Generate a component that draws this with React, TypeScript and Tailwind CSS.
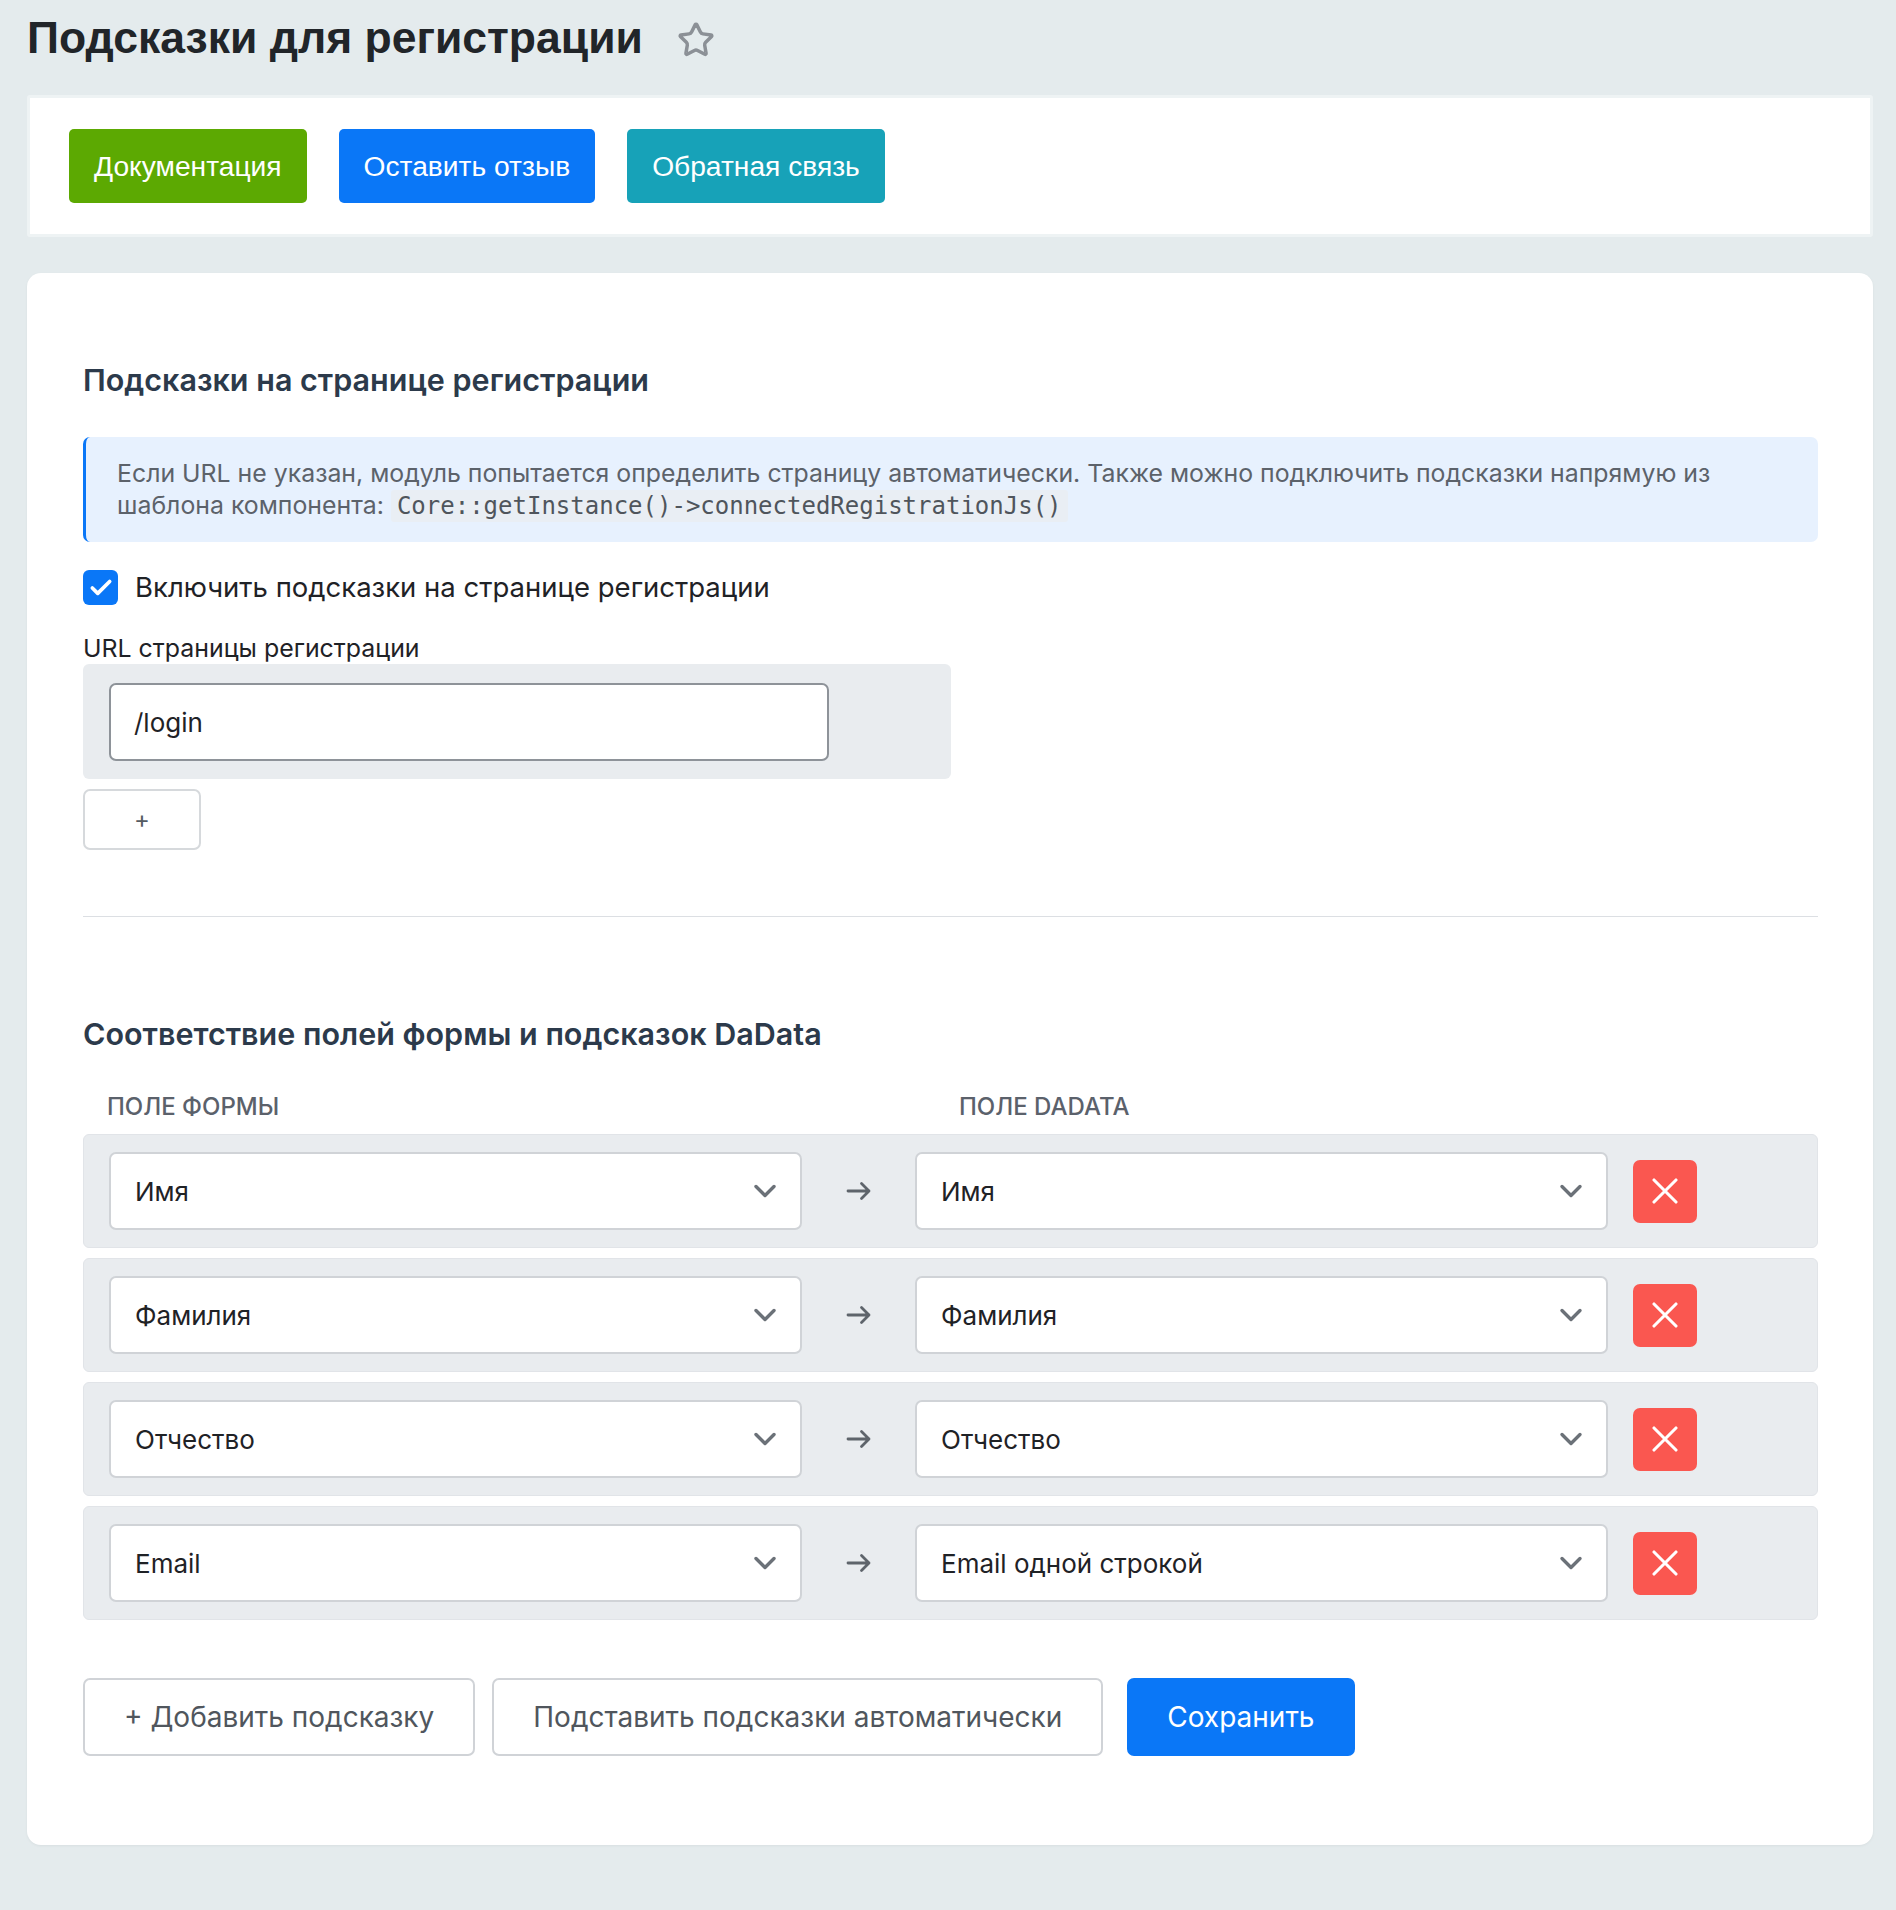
import { Star, Check } from "lucide-react";

const mappings = [
  { form: "Имя", dadata: "Имя" },
  { form: "Фамилия", dadata: "Фамилия" },
  { form: "Отчество", dadata: "Отчество" },
  { form: "Email", dadata: "Email одной строкой" },
];

const Chevron = () => (
  <svg width="24" height="14" viewBox="0 0 24 14" fill="none" stroke="#6b7178" strokeWidth="3.4" strokeLinecap="round" strokeLinejoin="round">
    <path d="M3 2.5 12 11.5 21 2.5" />
  </svg>
);

const Arrow = () => (
  <svg width="26" height="20" viewBox="0 0 26 20" fill="none" stroke="#5e646b" strokeWidth="2.8" strokeLinecap="round" strokeLinejoin="round">
    <path d="M2 10h21M15.5 2.5 23 10l-7.5 7.5" />
  </svg>
);

const Cross = () => (
  <svg width="26" height="26" viewBox="0 0 26 26" fill="none" stroke="#fff" strokeWidth="3.1" strokeLinecap="round">
    <path d="M2 2l22 22M24 2 2 24" />
  </svg>
);

const SelectBox = ({ value }: { value: string }) => (
  <div className="flex items-center justify-between w-[693px] h-[78px] bg-white border-2 border-[#d0d3d7] rounded-[7px] pl-[24px] pr-[23px]">
    <span className="text-[26px] text-[#1f2226]">{value}</span>
    <Chevron />
  </div>
);

const App = () => {
  return (
    <div className="min-h-[1910px] bg-[#e4ebed] pl-[27px] pr-[23px] font-['Inter',sans-serif]">
      {/* Page header */}
      <div className="h-[95px] flex items-start pt-[11px]">
        <h1 className="font-['Liberation_Sans',Arial,sans-serif] font-bold text-[44.5px] leading-[54px] text-[#212529]">
          Подсказки для регистрации
        </h1>
        <Star className="ml-[34px] mt-[10px] w-[38px] h-[38px] text-[#8b9096]" strokeWidth={2.2} />
      </div>

      {/* Links bar */}
      <div className="h-[142px] bg-white border-[3px] border-[#eef3f4] rounded-[3px] flex items-center gap-[32px] px-[39px] font-['Liberation_Sans',Arial,sans-serif]">
        <button className="h-[74px] px-[25px] rounded-[5px] bg-[#5ca902] text-white text-[28.2px]">
          Документация
        </button>
        <button className="h-[74px] px-[25px] rounded-[5px] bg-[#0a77f7] text-white text-[28.2px]">
          Оставить отзыв
        </button>
        <button className="h-[74px] px-[25px] rounded-[5px] bg-[#17a2b8] text-white text-[28.2px]">
          Обратная связь
        </button>
      </div>

      {/* Settings card */}
      <div className="mt-[36px] bg-white rounded-[14px] shadow-[0_1px_3px_rgba(0,0,0,0.05)] pl-[56px] pr-[55px] pt-[86px] pb-[89px]">
        <h2 className="text-[30.5px] leading-[42px] font-semibold text-[#2c3a4b]">
          Подсказки на странице регистрации
        </h2>

        <div className="mt-[36px] bg-[#e7f1fe] border-l-[3px] border-[#0a77f7] rounded-[7px] pl-[31px] pr-[20px] py-[20px] text-[24.85px] leading-[32px] text-[#5c626a]">
          Если URL не указан, модуль попытается определить страницу автоматически. Также можно подключить подсказки напрямую из
          <br />
          шаблона компонента:{" "}
          <code className="font-['DejaVu_Sans_Mono',monospace] text-[24px] bg-[#e9eef4] px-[6px] py-[2px] rounded-[3px] text-[#4f555c]">
            Core::getInstance()-&gt;connectedRegistrationJs()
          </code>
        </div>

        <label className="mt-[28px] flex items-center gap-[17px]">
          <span className="w-[35px] h-[35px] rounded-[6px] bg-[#0a77f7] flex items-center justify-center">
            <Check className="w-[26px] h-[26px] text-white" strokeWidth={3.4} />
          </span>
          <span className="text-[27.5px] leading-[35px] text-[#1f2226]">
            Включить подсказки на странице регистрации
          </span>
        </label>

        <div className="mt-[28px] text-[24.9px] leading-[30px] text-[#1f2226]">
          URL страницы регистрации
        </div>
        <div className="mt-[1px] w-[868px] bg-[#e9ecef] rounded-[6px] pl-[26px] pt-[19px] pb-[18px]">
          <div className="w-[720px] h-[78px] bg-white border-2 border-[#8e9399] rounded-[7px] flex items-center px-[23px] text-[26px] text-[#1f2226]">
            /login
          </div>
        </div>
        <button className="mt-[10px] w-[118px] h-[61px] bg-white border-2 border-[#d6d9dc] rounded-[7px] text-[24px] text-[#555b62]">
          +
        </button>

        <div className="mt-[66px] h-px bg-[#dcdfe3]" />

        <h2 className="mt-[96px] text-[30.5px] leading-[42px] font-semibold text-[#2c3a4b]">
          Соответствие полей формы и подсказок DaData
        </h2>

        <div className="mt-[38px] flex text-[24px] leading-[28px] font-medium uppercase text-[#5b616b]">
          <span className="w-[876px] pl-[24px]">Поле формы</span>
          <span>Поле DaData</span>
        </div>

        <div className="mt-[13px] flex flex-col gap-[10px]">
          {mappings.map((row) => (
            <div
              key={row.form}
              className="h-[114px] bg-[#e9ecef] border border-[#e1e4e8] rounded-[6px] flex items-center pl-[25px]"
            >
              <SelectBox value={row.form} />
              <div className="w-[113px] flex justify-center">
                <Arrow />
              </div>
              <SelectBox value={row.dadata} />
              <button className="ml-[25px] w-[64px] h-[63px] rounded-[7px] bg-[#fa5750] flex items-center justify-center">
                <Cross />
              </button>
            </div>
          ))}
        </div>

        <div className="mt-[58px] flex items-center">
          <button className="h-[78px] px-[39px] bg-white border-2 border-[#d0d3d7] rounded-[7px] text-[28px] text-[#50565d]">
            + Добавить подсказку
          </button>
          <button className="ml-[17px] h-[78px] px-[39px] bg-white border-2 border-[#d0d3d7] rounded-[7px] text-[28px] text-[#50565d]">
            Подставить подсказки автоматически
          </button>
          <button className="ml-[24px] h-[78px] px-[40px] bg-[#0a77f7] rounded-[7px] text-[28px] text-white">
            Сохранить
          </button>
        </div>
      </div>
    </div>
  );
};

export default App;
